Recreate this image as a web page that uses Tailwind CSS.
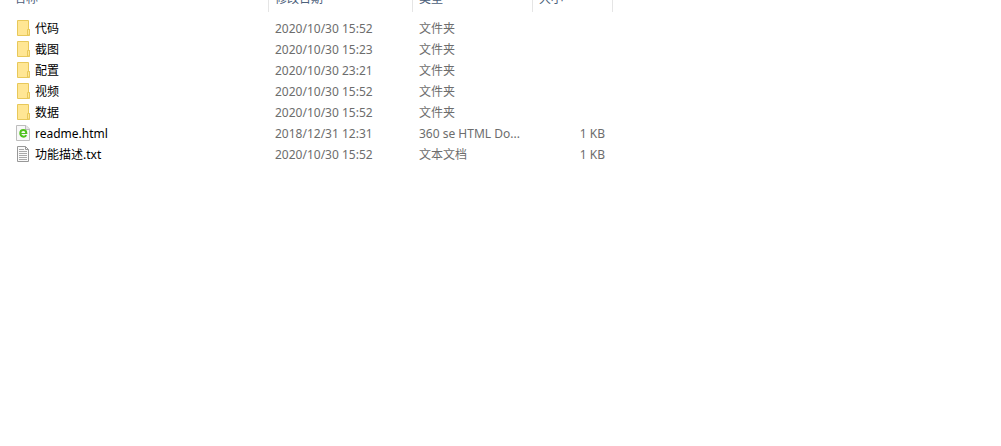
<!DOCTYPE html>
<html lang="zh-CN">
<head>
  <meta charset="UTF-8">
  <meta name="viewport" content="width=device-width, initial-scale=1.0">
  <title>文件列表</title>
  <script src="https://cdn.jsdelivr.net/npm/@tailwindcss/browser@4"></script>
</head>
<body class="bg-white min-h-screen overflow-hidden font-['Noto_Sans','Noto_Sans_CJK_SC',sans-serif] text-xs text-[#6d6d6d]">
  <!-- 图标 -->
  <svg class="hidden">
    <symbol id="folder" viewBox="0 0 16 16">
      <path d="M1.500.5h11v9h1v6h-12z" fill="#ffe694" stroke="#e8c85a"/>
      <path d="M11.500 15v-5.500h2v5.500z" fill="#ffe694" stroke="#e8c85a"/>
    </symbol>
    <symbol id="html" viewBox="0 0 16 16">
      <path d="M.5.5h9.500l3.500 3.500v11.500h-13z" fill="#f8f8f8" stroke="#bdbdbd"/>
      <path d="M9.500.5v4h4" fill="#e6e6e6" stroke="#bdbdbd"/>
      <path d="M10.200 10.200c-1 2.200-5.900 2-5.900-1.900 0-4.400 6-4.400 6 0" fill="none" stroke="#4fc31c" stroke-width="2"/>
      <path d="M4 8.500h7.300" stroke="#4fc31c"/>
    </symbol>
    <symbol id="txt" viewBox="0 0 16 16">
      <path d="M1.500.5h8l3 3v12h-11z" fill="#fafafa" stroke="#989898"/>
      <path d="M9.500.5v3h3" fill="none" stroke="#989898"/>
      <path d="M3 3.500h5M3 5.500h8M3 7.500h8M3 9.500h8M3 11.500h8M3 13.500h8" stroke="#a8a8a8"/>
    </symbol>
  </svg>

  <!-- 文件列表，表头已向上滚动一半 -->
  <table class="-mt-3 table-fixed w-[613px] border-collapse whitespace-nowrap">
    <colgroup>
      <col class="w-[269px]">
      <col class="w-36">
      <col class="w-[120px]">
      <col class="w-20">
    </colgroup>
    <thead class="text-left text-[#4c607a]">
      <tr>
        <th class="p-0 pb-1.5 font-normal"><div class="h-6 pl-3.5 leading-[22px] border-r border-[#e5e5e5]">名称</div></th>
        <th class="p-0 pb-1.5 font-normal"><div class="h-6 pl-1.5 leading-[22px] border-r border-[#e5e5e5]">修改日期</div></th>
        <th class="p-0 pb-1.5 font-normal"><div class="h-6 pl-1.5 leading-[22px] border-r border-[#e5e5e5]">类型</div></th>
        <th class="p-0 pb-1.5 font-normal"><div class="h-6 pl-1.5 leading-[22px] border-r border-[#e5e5e5]">大小</div></th>
      </tr>
    </thead>
    <tbody class="leading-[21px]">
      <tr>
        <td class="p-0 pl-4"><a href="#" class="flex items-start gap-[3px] text-black"><svg class="size-4 mt-0.5"><use href="#folder"/></svg>代码</a></td>
        <td class="p-0 pl-1.5">2020/10/30 15:52</td>
        <td class="p-0 pl-1.5">文件夹</td>
        <td></td>
      </tr>
      <tr>
        <td class="p-0 pl-4"><a href="#" class="flex items-start gap-[3px] text-black"><svg class="size-4 mt-0.5"><use href="#folder"/></svg>截图</a></td>
        <td class="p-0 pl-1.5">2020/10/30 15:23</td>
        <td class="p-0 pl-1.5">文件夹</td>
        <td></td>
      </tr>
      <tr>
        <td class="p-0 pl-4"><a href="#" class="flex items-start gap-[3px] text-black"><svg class="size-4 mt-0.5"><use href="#folder"/></svg>配置</a></td>
        <td class="p-0 pl-1.5">2020/10/30 23:21</td>
        <td class="p-0 pl-1.5">文件夹</td>
        <td></td>
      </tr>
      <tr>
        <td class="p-0 pl-4"><a href="#" class="flex items-start gap-[3px] text-black"><svg class="size-4 mt-0.5"><use href="#folder"/></svg>视频</a></td>
        <td class="p-0 pl-1.5">2020/10/30 15:52</td>
        <td class="p-0 pl-1.5">文件夹</td>
        <td></td>
      </tr>
      <tr>
        <td class="p-0 pl-4"><a href="#" class="flex items-start gap-[3px] text-black"><svg class="size-4 mt-0.5"><use href="#folder"/></svg>数据</a></td>
        <td class="p-0 pl-1.5">2020/10/30 15:52</td>
        <td class="p-0 pl-1.5">文件夹</td>
        <td></td>
      </tr>
      <tr>
        <td class="p-0 pl-4"><a href="#" class="flex items-start gap-[3px] text-black"><svg class="size-4 mt-0.5"><use href="#html"/></svg>readme.html</a></td>
        <td class="p-0 pl-1.5">2018/12/31 12:31</td>
        <td class="p-0 pl-1.5">360 se HTML Do...</td>
        <td class="p-0 pr-2 text-right">1 KB</td>
      </tr>
      <tr>
        <td class="p-0 pl-4"><a href="#" class="flex items-start gap-[3px] text-black"><svg class="size-4 mt-0.5"><use href="#txt"/></svg>功能描述.txt</a></td>
        <td class="p-0 pl-1.5">2020/10/30 15:52</td>
        <td class="p-0 pl-1.5">文本文档</td>
        <td class="p-0 pr-2 text-right">1 KB</td>
      </tr>
    </tbody>
  </table>
</body>
</html>
